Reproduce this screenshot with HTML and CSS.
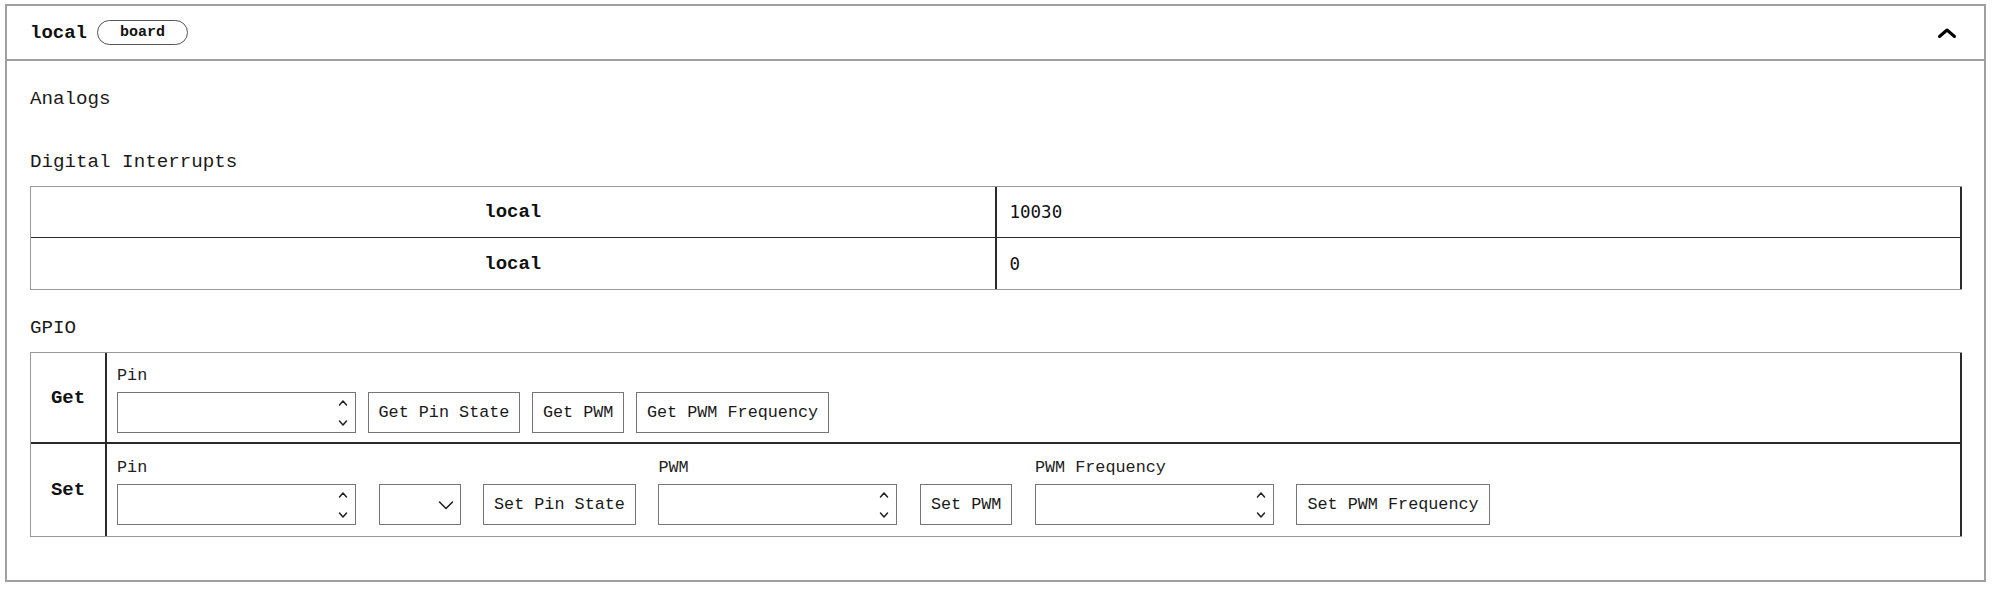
FILE: index.html
```html
<!DOCTYPE html>
<html lang="en">
<head>
<meta charset="utf-8">
<title>local board</title>
<link rel="stylesheet" href="styles.css">
</head>
<body>
<div class="page">
  <div class="card">
    <div class="card-header">
      <div class="title">
        <span class="name">local</span>
        <span class="badge">board</span>
      </div>
      <svg class="collapse" width="20" height="12" viewBox="0 0 20 12" aria-hidden="true">
        <polyline points="2.5,9.5 10,3 17.5,9.5" fill="none" stroke="#000" stroke-width="3" stroke-linecap="round" stroke-linejoin="round"/>
      </svg>
    </div>
    <div class="card-body">
      <section class="section section-empty">
        <h2 class="heading">Analogs</h2>
      </section>
      <section class="section">
        <h2 class="heading">Digital Interrupts</h2>
        <table class="di">
          <tbody>
            <tr><td class="key">local</td><td class="val">10030</td></tr>
            <tr><td class="key">local</td><td class="val">0</td></tr>
          </tbody>
        </table>
      </section>
      <section class="section">
        <h2 class="heading">GPIO</h2>
        <table class="gpio">
          <tbody>
            <tr>
              <th class="op">Get</th>
              <td class="ctl">
                <div class="row row-get">
                  <label class="field">
                    <span class="lbl">Pin</span>
                    <span class="num"><input type="number" class="num-input"><svg class="spin" width="10" height="41" viewBox="0 0 10 41" aria-hidden="true"><polyline points="1.5,13 5,9 8.5,13" fill="none" stroke="#222" stroke-width="1.5" stroke-linecap="round" stroke-linejoin="round"/><polyline points="1.5,29 5,33 8.5,29" fill="none" stroke="#222" stroke-width="1.5" stroke-linecap="round" stroke-linejoin="round"/></svg></span>
                  </label>
                  <button class="btn" type="button">Get Pin State</button>
                  <button class="btn" type="button">Get PWM</button>
                  <button class="btn" type="button">Get PWM Frequency</button>
                </div>
              </td>
            </tr>
            <tr>
              <th class="op">Set</th>
              <td class="ctl">
                <div class="row row-set">
                  <label class="field">
                    <span class="lbl">Pin</span>
                    <span class="num"><input type="number" class="num-input"><svg class="spin" width="10" height="41" viewBox="0 0 10 41" aria-hidden="true"><polyline points="1.5,13 5,9 8.5,13" fill="none" stroke="#222" stroke-width="1.5" stroke-linecap="round" stroke-linejoin="round"/><polyline points="1.5,29 5,33 8.5,29" fill="none" stroke="#222" stroke-width="1.5" stroke-linecap="round" stroke-linejoin="round"/></svg></span>
                  </label>
                  <div class="select"><svg width="16" height="10" viewBox="0 0 16 10" aria-hidden="true"><polyline points="1.5,2 8,8.5 14.5,2" fill="none" stroke="#222" stroke-width="1.6" stroke-linecap="round" stroke-linejoin="round"/></svg></div>
                  <button class="btn" type="button">Set Pin State</button>
                  <label class="field">
                    <span class="lbl">PWM</span>
                    <span class="num"><input type="number" class="num-input"><svg class="spin" width="10" height="41" viewBox="0 0 10 41" aria-hidden="true"><polyline points="1.5,13 5,9 8.5,13" fill="none" stroke="#222" stroke-width="1.5" stroke-linecap="round" stroke-linejoin="round"/><polyline points="1.5,29 5,33 8.5,29" fill="none" stroke="#222" stroke-width="1.5" stroke-linecap="round" stroke-linejoin="round"/></svg></span>
                  </label>
                  <button class="btn" type="button">Set PWM</button>
                  <label class="field">
                    <span class="lbl">PWM Frequency</span>
                    <span class="num"><input type="number" class="num-input"><svg class="spin" width="10" height="41" viewBox="0 0 10 41" aria-hidden="true"><polyline points="1.5,13 5,9 8.5,13" fill="none" stroke="#222" stroke-width="1.5" stroke-linecap="round" stroke-linejoin="round"/><polyline points="1.5,29 5,33 8.5,29" fill="none" stroke="#222" stroke-width="1.5" stroke-linecap="round" stroke-linejoin="round"/></svg></span>
                  </label>
                  <button class="btn" type="button">Set PWM Frequency</button>
                </div>
              </td>
            </tr>
          </tbody>
        </table>
      </section>
    </div>
  </div>
</div>
</body>
</html>
```

FILE: styles.css
```css
* {
  box-sizing: border-box;
}

body {
  margin: 0;
  background: #ffffff;
  color: #111111;
  font-family: "Courier New", "Liberation Mono", monospace;
}

.page {
  padding: 4px 13px 0 5px;
}

.card {
  border: 2px solid #a0a0a0;
  background: #ffffff;
}

.card-header {
  height: 55px;
  display: flex;
  align-items: center;
  justify-content: space-between;
  padding: 0 27px 0 23px;
  border-bottom: 2px solid #a0a0a0;
}

.title {
  display: flex;
  align-items: center;
  gap: 10px;
}

.name {
  font-weight: bold;
  font-size: 19px;
}

.badge {
  height: 25px;
  display: flex;
  align-items: center;
  padding: 0 22px;
  border: 1px solid #555555;
  border-radius: 13px;
  font-size: 15px;
  font-weight: bold;
}

.collapse {
  display: block;
}

.card-body {
  display: flex;
  flex-direction: column;
  gap: 26px;
  padding: 26px 22px 43px 23px;
}

.heading {
  margin: 0 0 12px;
  font-size: 19.2px;
  line-height: 24px;
  font-weight: normal;
  color: #1a1a1a;
}

.section-empty .heading {
  margin-bottom: 13px;
}

/* Digital interrupts table */
.di {
  width: 100%;
  table-layout: fixed;
  border-spacing: 0;
  border-top: 1px solid #999999;
  border-left: 1px solid #999999;
  border-bottom: 1px solid #999999;
}

.di td {
  height: 51px;
  padding: 0 12px;
  border-right: 2px solid #2a2a2a;
  font-size: 19px;
}

.di tr:first-child td {
  border-bottom: 1px solid #2a2a2a;
}

.di .key {
  text-align: center;
  font-weight: bold;
}

.di .val {
  font-family: "DejaVu Sans Mono", "Liberation Mono", monospace;
  font-size: 17.5px;
  padding-left: 13px;
}

/* GPIO table */
.gpio {
  width: 100%;
  table-layout: fixed;
  border-spacing: 0;
  border-top: 1px solid #999999;
  border-left: 1px solid #999999;
  border-bottom: 1px solid #999999;
}

.gpio .op {
  width: 76px;
  border-right: 2px solid #2a2a2a;
  font-size: 19px;
  font-weight: bold;
  text-align: center;
  vertical-align: middle;
  padding: 0;
}

.gpio .ctl {
  border-right: 2px solid #2a2a2a;
  padding: 13px 10px 9px;
}

.gpio tr:first-child th,
.gpio tr:first-child td {
  border-bottom: 2px solid #2a2a2a;
}

.gpio tr:last-child .ctl {
  padding-top: 14px;
  padding-bottom: 11px;
}

.row {
  display: flex;
  align-items: flex-end;
}

.row-get {
  gap: 11.5px;
}

.row-set {
  gap: 22.5px;
}

.field {
  display: flex;
  flex-direction: column;
  gap: 6px;
}

.lbl {
  font-size: 16.8px;
  line-height: 20px;
  color: #222222;
}

.num {
  width: 239px;
  height: 41px;
  display: flex;
  align-items: stretch;
  border: 1px solid #767676;
  background: #ffffff;
  padding-right: 7px;
}

.num-input {
  flex: 1;
  min-width: 0;
  border: 0;
  outline: none;
  background: transparent;
  font-family: inherit;
  font-size: 16px;
  -moz-appearance: textfield;
  appearance: textfield;
}

.num-input::-webkit-inner-spin-button,
.num-input::-webkit-outer-spin-button {
  -webkit-appearance: none;
  margin: 0;
}

.spin {
  display: block;
  flex: none;
  margin-top: -1px;
}

.select {
  width: 82px;
  height: 41px;
  display: flex;
  align-items: center;
  justify-content: flex-end;
  padding-right: 6px;
  border: 1px solid #767676;
  background: #ffffff;
}

.select svg {
  display: block;
}

.btn {
  height: 41px;
  padding: 0 10px;
  border: 1px solid #767676;
  border-radius: 0;
  background: #ffffff;
  color: #1a1a1a;
  font-family: "Courier New", "Liberation Mono", monospace;
  font-size: 16.8px;
  line-height: 20px;
  white-space: nowrap;
}
```
